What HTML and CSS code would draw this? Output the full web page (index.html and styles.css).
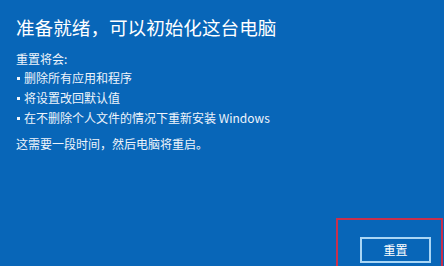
FILE: index.html
```html
<!DOCTYPE html>
<html lang="zh-CN">
<head>
<meta charset="utf-8">
<title>初始化这台电脑</title>
<link rel="stylesheet" href="styles.css">
</head>
<body>
<main class="page">
  <h1 class="title">准备就绪，可以初始化这台电脑</h1>
  <p class="lead">重置将会:</p>
  <ul class="list">
    <li class="item">删除所有应用和程序</li>
    <li class="item">将设置改回默认值</li>
    <li class="item">在不删除个人文件的情况下重新安装 Windows</li>
  </ul>
  <p class="note">这需要一段时间，然后电脑将重启。</p>
  <footer class="footer">
    <button class="btn" type="button">重置</button>
  </footer>
</main>
<div class="highlight"></div>
</body>
</html>
```
FILE: styles.css
```css
html, body {
  margin: 0;
  padding: 0;
}
body {
  width: 444px;
  height: 266px;
  overflow: hidden;
  background: #0866b8;
  font-family: "Noto Sans CJK SC", "Noto Sans", sans-serif;
  color: #eef4fb;
  position: relative;
}
.page {
  box-sizing: border-box;
  height: 266px;
  display: flex;
  flex-direction: column;
  padding: 14px 0 3px 16px;
}
.title {
  margin: 0;
  font-size: 18.6px;
  font-weight: 400;
  line-height: 25px;
  color: #ffffff;
}
.lead {
  margin: 11px 0 0;
  font-size: 12px;
  line-height: 18px;
}
.list {
  list-style: none;
  margin: 0;
  padding: 0;
}
.item {
  display: flex;
  align-items: center;
  gap: 4px;
  font-size: 12px;
  line-height: 20px;
}
.item::before {
  content: "";
  width: 3px;
  height: 3px;
  margin-left: 1px;
  background: #eef4fb;
  flex: none;
}
.note {
  margin: 5.5px 0 0;
  font-size: 12px;
  line-height: 20px;
}
.footer {
  margin-top: auto;
  display: flex;
  justify-content: flex-end;
  padding-right: 13px;
}
.btn {
  box-sizing: border-box;
  width: 71px;
  height: 26px;
  background: transparent;
  border: 2px solid #a9d6f5;
  color: #ffffff;
  font-family: inherit;
  font-size: 12px;
  line-height: 20px;
  padding: 0;
}
.highlight {
  position: absolute;
  left: 336px;
  top: 218px;
  width: 107px;
  height: 60px;
  box-sizing: border-box;
  border: 2px solid #c8304c;
  pointer-events: none;
}
```
